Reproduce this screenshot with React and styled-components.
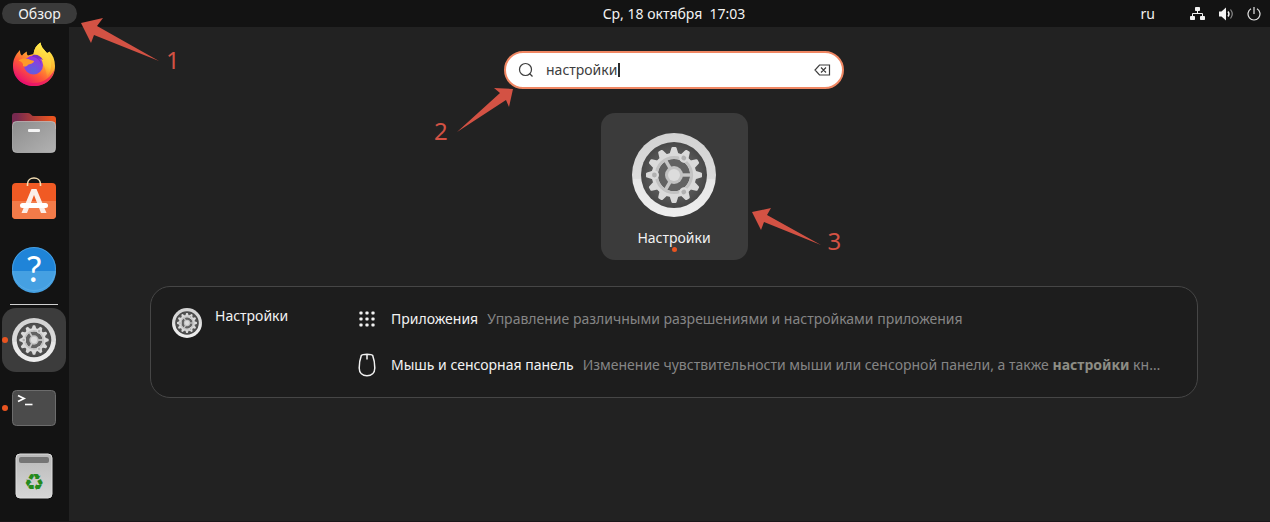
import React, { useState } from 'react';
import styled, { createGlobalStyle } from 'styled-components'

const GlobalStyle = createGlobalStyle`
  * { box-sizing: border-box; }
  body {
    margin: 0;
    background: #222222;
    color: #f2f2f2;
    font-family: "Noto Sans", "Open Sans", sans-serif;
    font-size: 14px;
    line-height: 20px;
  }
  button, input { font: inherit; color: inherit; }
  ul { list-style: none; margin: 0; padding: 0; }
  svg { display: block; }
`

const Desktop = styled.div`
  min-height: 100vh;
  display: flex;
  flex-direction: column;
  border-bottom: 1px solid #1b171a;
`

const TopBar = styled.header`
  display: grid;
  grid-template-columns: 78px 1fr;
  align-items: center;
  height: 27px;
  background: #131313;
`

const Plain = styled.button`
  border: 0;
  padding: 0;
  background: none;
`

const Overview = styled(Plain)`
  position: relative;
  height: 21px;
  margin: 0 1px 0 2px;
  border-radius: 11px;
  background: #3a3a3a;
`

const BarRest = styled.div`
  display: grid;
  grid-template-columns: 1fr auto 1fr;
  align-items: center;
`

const Clock = styled(Plain)`
  grid-column: 2;
  white-space: pre;
`

const Status = styled.div`
  display: flex;
  justify-content: flex-end;
  align-items: center;
  gap: 13px;
  padding-right: 9px;
`

const Lang = styled(Plain)`
  margin-right: 22px;
`

const Body = styled.div`
  flex: 1;
  display: flex;
`

const Dock = styled.nav`
  width: 69px;
  padding: 4px 3px 0 2px;
  background: #131313;
`

const DockCell = styled.li`
  padding: 2px 0;
`

const DockButton = styled(Plain)`
  position: relative;
  display: flex;
  align-items: center;
  justify-content: center;
  width: 64px;
  height: 64px;
  border-radius: 14px;
  background: ${p => p.$active ? '#3c3c3c' : 'none'};
`

const Running = styled.i`
  position: absolute;
  left: 0;
  width: 6px;
  height: 6px;
  border-radius: 50%;
  background: #e95420;
`

const Separator = styled.li`
  height: 1px;
  margin: 1px 8px;
  background: #cfcfcf;
`

const Main = styled.main`
  flex: 1;
  min-width: 0;
  display: flex;
  flex-direction: column;
  align-items: center;
  padding: 24px 0 0 9px;
`

const Search = styled.label`
  position: relative;
  display: flex;
  align-items: center;
  width: 340px;
  height: 38px;
  padding: 0 11px 0 12px;
  border: 2px solid #f08763;
  border-radius: 19px;
  background: #ffffff;
  color: #3d3d3d;
`

const SearchInput = styled.input`
  field-sizing: content;
  margin: 0 1px 0 12px;
  padding: 0;
  border: 0;
  outline: 0;
  background: none;
`

const Caret = styled.i`
  width: 2px;
  height: 14px;
  background: #2b2b2b;
`

const Clear = styled(Plain)`
  margin-left: auto;
`

const Tile = styled(Plain)`
  position: relative;
  display: flex;
  flex-direction: column;
  align-items: center;
  width: 147px;
  height: 147px;
  margin: 24px 0 26px;
  padding-top: 20px;
  border-radius: 14px;
  background: #3b3b3b;
`

const TileName = styled.span`
  margin-top: 11px;
`

const TileDot = styled.i`
  width: 5px;
  height: 5px;
  margin-top: -1px;
  border-radius: 50%;
  background: #e95420;
`

const Panel = styled.section`
  align-self: stretch;
  display: grid;
  grid-template-columns: 185px 1fr;
  margin: 0 72px;
  padding: 9px 20px 9px 21px;
  border: 1px solid #464646;
  border-radius: 20px;
  background: #1d1d1d;
`

const Provider = styled(Plain)`
  display: flex;
  align-items: flex-start;
  gap: 13px;
  padding-top: 10px;
  svg { margin-top: 2px; }
`

const Results = styled.ul`
  min-width: 0;
`

const Result = styled(Plain)`
  display: flex;
  align-items: center;
  width: 100%;
  height: 46px;
  text-align: left;
  white-space: nowrap;
`

const ResultIcon = styled.span`
  flex: none;
  display: flex;
  justify-content: center;
  width: 20px;
  margin-right: 14px;
`

const ResultTitle = styled.span`
  flex: none;
  margin-right: 9px;
`

const ResultText = styled.span`
  overflow: hidden;
  color: #858585;
  b { color: #8d8d85; }
`

// hint arrows lie over the desktop, anchored to the thing they point at
const Hint = styled.span`
  position: absolute;
  z-index: 1;
  left: ${p => p.$x}px;
  top: ${p => p.$y}px;
  display: flex;
  align-items: flex-start;
  gap: 6px;
  color: #d35244;
  font-size: 24px;
  line-height: 24px;
  pointer-events: none;
`

const HintNumber = styled.span`
  padding-top: ${p => p.$drop}px;
`

const toothAngles = [0, 30, 60, 90, 120, 150, 180, 210, 240, 270, 300, 330]

function Gear({ size }) {
  return (
    <svg width={size} height={size} viewBox="0 0 84 84">
      <defs>
        <radialGradient id="gearWell">
          <stop offset="0.5" stopColor="#626262" />
          <stop offset="1" stopColor="#474747" />
        </radialGradient>
        <linearGradient id="gearRim" x2="0" y2="1">
          <stop offset="0" stopColor="#d2d2d2" />
          <stop offset="0.54" stopColor="#dcdcdc" />
          <stop offset="0.55" stopColor="#e6e6e6" />
          <stop offset="1" stopColor="#eeeeee" />
        </linearGradient>
      </defs>
      <circle cx="42" cy="42" r="42" fill="url(#gearRim)" />
      <circle cx="42" cy="42" r="33" fill="url(#gearWell)" />
      <g fill="#dadada">
        {toothAngles.map(a => (
          <path key={a} d="M37.4 21.5 L39.4 15 Q39.7 14 40.6 14 H43.4 Q44.3 14 44.6 15 L46.6 21.5 Z" transform={`rotate(${a} 42 42)`} />
        ))}
      </g>
      <circle cx="42" cy="42" r="19.2" fill="none" stroke="#dadada" strokeWidth="6.2" />
      <circle cx="42" cy="42" r="17.6" fill="none" stroke="#c2c2c2" strokeWidth="3" />
      {[0, 120, 240].map(a => (
        <g key={a} transform={`rotate(${a} 42 42)`}>
          <path d="M49 42 H60" stroke="#c6c6c6" strokeWidth="3.4" />
          <circle cx="22.4" cy="42" r="4.6" fill="#dadada" />
          <circle cx="22.4" cy="42" r="2.4" fill="#b0b0b0" />
        </g>
      ))}
      <circle cx="42" cy="42" r="9" fill="#c2c2c2" />
      <circle cx="42" cy="42" r="6" fill="#dcdcdc" />
    </svg>
  )
}

function Firefox() {
  return (
    <svg width="48" height="48" viewBox="0 0 48 48">
      <defs>
        <linearGradient id="ffBody" x1="0.85" y1="0.1" x2="0.25" y2="0.95">
          <stop offset="0" stopColor="#fff04a" />
          <stop offset="0.35" stopColor="#ffb02e" />
          <stop offset="0.65" stopColor="#ff5a37" />
          <stop offset="1" stopColor="#e9106f" />
        </linearGradient>
        <radialGradient id="ffOrb" cx="0.5" cy="0.8" r="0.8">
          <stop offset="0" stopColor="#5b62dd" />
          <stop offset="1" stopColor="#a12fe0" />
        </radialGradient>
        <linearGradient id="ffTail" x1="0.7" y1="0" x2="0.4" y2="1">
          <stop offset="0" stopColor="#fff44f" />
          <stop offset="0.6" stopColor="#ffc83a" />
          <stop offset="1" stopColor="#ff8a2c" stopOpacity="0" />
        </linearGradient>
      </defs>
      <path d="M3 25 C3 19 5 14 10 9 C10 12 10.5 13.5 12 14.5 C13.5 12.8 15 11.5 17 10.5 C16.6 12 16.8 13.5 18 14.5 L23.5 13 C24 8 26.5 4 30.5 1.5 C31 6 34 8.5 37 12 L39.5 10.5 C43 14 45 19 45 25 C45 37 36 45 24 45 C12 45 3 37 3 25Z" fill="url(#ffBody)" />
      <path d="M3.5 28 C6 38 15 42.5 24 42 C34 42 41 36 44.7 28 C43 38.5 35 45 24 45 C13 45 5 38 3.5 28Z" fill="#e8106c" opacity="0.65" />
      <path d="M23.5 13 C24 8 26.5 4 30.5 1.5 C31 6 34 8.5 37 12 C42 18 43 28 37 36 C36 27 32 18 23.5 13Z" fill="url(#ffTail)" />
      <circle cx="23.5" cy="24" r="9.5" fill="url(#ffOrb)" />
      <path d="M23 14 C27 13 31 15 33 19 L28 17 C30 19 31 21 31 23 C29 18 26 16 22 16Z" fill="#7a2fc4" />
      <path d="M8.5 19.5 C12 16.5 16 17.5 18.5 18 C20 19 22.5 19.5 24 20 C24 22 21 23 18.5 23.5 C17 25 15.5 26.5 13 25 C13.5 22.5 12 20.5 8.5 19.5Z" fill="#ff9a28" />
    </svg>
  )
}

function Files() {
  return (
    <svg width="48" height="48" viewBox="0 0 48 48">
      <defs>
        <linearGradient id="folderBack"><stop offset="0.1" stopColor="#77294f" /><stop offset="0.9" stopColor="#e95420" /></linearGradient>
        <linearGradient id="folderFront" x1="0" x2="1" y2="1"><stop offset="0" stopColor="#8d8d8d" /><stop offset="1" stopColor="#b2b2b2" /></linearGradient>
      </defs>
      <path d="M2 20 V7 Q2 4 5 4 H18 Q20 4 21 5.5 Q22 7 24 7 H43 Q46 7 46 10 V20Z" fill="url(#folderBack)" />
      <rect x="2.5" y="12.5" width="43" height="31" rx="4" fill="url(#folderFront)" stroke="#c2c2c2" strokeOpacity="0.7" />
      <rect x="18" y="20" width="12" height="3" rx="1" fill="#f5f5f5" />
    </svg>
  )
}

function Software() {
  return (
    <svg width="48" height="48" viewBox="0 0 48 48">
      <rect x="2" y="6" width="44" height="36" rx="4" fill="#f05a24" />
      <path d="M2 24 H46 V38 Q46 42 42 42 H6 Q2 42 2 38Z" fill="#f37b49" />
      <path d="M17.5 9 V7 C17.5 -1 30.5 -1 30.5 7 V9" fill="none" stroke="#f6dfb4" strokeWidth="1.6" />
      <path d="M21.5 12 H26.500 L36.500 36 H31 L24 18 L17 36 H11.500Z" fill="#fbeee8" />
      <rect x="10" y="26" width="28" height="5" rx="2.5" fill="#ffffff" />
    </svg>
  )
}

function Help() {
  return (
    <svg width="48" height="48" viewBox="0 0 48 48">
      <circle cx="24" cy="24" r="22" fill="#1f84d8" />
      <path d="M2 26 A22 22 0 0 0 46 26Z" fill="#45a0e2" />
      <circle cx="24" cy="24" r="21.5" fill="none" stroke="#5fb0ea" strokeOpacity="0.6" />
      <text x="24" y="37" textAnchor="middle" fontFamily="Lato, sans-serif" fontSize="36" fill="#ffffff">?</text>
    </svg>
  )
}

function Terminal() {
  return (
    <svg width="48" height="48" viewBox="0 0 48 48">
      <rect x="2.5" y="6.5" width="43" height="35" rx="4" fill="#4b4b4b" stroke="#6c6c6c" />
      <path d="M8 11.5 L14 14.5 L8 17.5" fill="none" stroke="#ffffff" strokeWidth="1.8" />
      <path d="M15 20.5 H22.5" stroke="#ffffff" strokeWidth="1.6" />
    </svg>
  )
}

function Trash() {
  return (
    <svg width="48" height="48" viewBox="0 0 48 48">
      <defs>
        <linearGradient id="bin" x2="0" y2="1"><stop offset="0" stopColor="#b9b9b9" /><stop offset="1" stopColor="#d6d6d6" /></linearGradient>
      </defs>
      <rect x="6" y="2" width="36" height="44" rx="4" fill="url(#bin)" stroke="#dedede" />
      <rect x="9" y="5" width="30" height="6" rx="2" fill="#757575" />
      <text x="24" y="38" textAnchor="middle" fontFamily="DejaVu Sans, sans-serif" fontSize="23" fill="#248a1c">♻</text>
    </svg>
  )
}

function Network() {
  return (
    <svg width="16" height="14" viewBox="0 0 16 14" fill="#f2f2f2">
      <rect x="5" y="0" width="5" height="4" rx="0.8" />
      <rect x="0" y="9" width="5" height="4" rx="0.8" />
      <rect x="10" y="9" width="5" height="4" rx="0.8" />
      <path d="M7.5 4 V6.5 M2.5 9 V6.5 H12.5 V9" fill="none" stroke="#f2f2f2" />
    </svg>
  )
}

function Volume() {
  return (
    <svg width="15" height="14" viewBox="0 0 15 14">
      <path d="M0 4.5 H2.5 L7 0.5 V13.5 L2.5 9.5 H0Z" fill="#f2f2f2" />
      <path d="M9 4.5 Q11 7 9 9.5" fill="none" stroke="#f2f2f2" strokeWidth="1.4" />
      <path d="M11.5 2.5 Q15 7 11.5 11.5" fill="none" stroke="#8c8c8c" strokeWidth="1.2" />
    </svg>
  )
}

function Power() {
  return (
    <svg width="14" height="14" viewBox="0 0 14 14" fill="none" stroke="#e6e6e6" strokeWidth="1.2">
      <path d="M4 1.8 A6 6 0 1 0 10 1.8 M7 0 V7" />
    </svg>
  )
}

function Lens() {
  return (
    <svg width="16" height="16" viewBox="0 0 16 16" fill="none" stroke="#3d3d3d" strokeWidth="1.2">
      <circle cx="7.5" cy="7.5" r="6" />
      <path d="M11.5 11.5 L14.5 14.5" />
    </svg>
  )
}

function Backspace() {
  return (
    <svg width="17" height="12" viewBox="0 0 17 12" fill="none" stroke="#3d3d3d" strokeWidth="1.2">
      <path d="M5.5 1 H15.5 V11 H5.5 L1 6Z M7 3.5 L12 8.5 M12 3.5 L7 8.5" />
    </svg>
  )
}

function AppsGrid() {
  const steps = [2, 8, 14]
  return (
    <svg width="16" height="16" viewBox="0 0 16 16" fill="#f2f2f2">
      {steps.map(y => steps.map(x => <rect key={x + '-' + y} x={x - 1.6} y={y - 1.6} width="3.2" height="3.2" rx="1" />))}
    </svg>
  )
}

function Mouse() {
  return (
    <svg width="18" height="24" viewBox="0 0 18 24" fill="none" stroke="#f2f2f2" strokeWidth="1.5">
      <path d="M9 1.2 C12 1.2 14 1.5 14.7 2.5 C15.8 5.5 16.8 10 16.8 15 C16.8 20 13.5 22.8 9 22.8 C4.5 22.8 1.2 20 1.2 15 C1.2 10 2.2 5.5 3.3 2.5 C4 1.5 6 1.2 9 1.2Z M9 1.5 V6.5" />
    </svg>
  )
}

const apps = [
  { name: 'Firefox', icon: <Firefox /> },
  { name: 'Файлы', icon: <Files /> },
  { name: 'Ubuntu Software', icon: <Software /> },
  { name: 'Справка', icon: <Help /> },
]

const opened = [
  { name: 'Настройки', icon: <Gear size={44} />, active: true, running: true },
  { name: 'Терминал', icon: <Terminal />, running: true },
  { name: 'Корзина', icon: <Trash /> },
]

function DockItem({ app }) {
  return (
    <DockCell>
      <DockButton aria-label={app.name} $active={app.active}>
        {app.running && <Running />}
        {app.icon}
      </DockButton>
    </DockCell>
  )
}

export default function App() {
  const [query, setQuery] = useState('настройки')

  return (
    <Desktop>
      <GlobalStyle />
      <TopBar>
        <Overview>
          Обзор
          <Hint $x={79} $y={15}>
            <svg width="79" height="44" viewBox="0 0 79 44">
              <path d="M0 5 L22 0 L16 8 L78 43 L13 17 L10 25Z" fill="currentColor" />
            </svg>
            <HintNumber $drop={30}>1</HintNumber>
          </Hint>
        </Overview>
        <BarRest>
          <Clock>Ср, 18 октября  17:03</Clock>
          <Status>
            <Lang>ru</Lang>
            <Network />
            <Volume />
            <Power />
          </Status>
        </BarRest>
      </TopBar>
      <Body>
        <Dock>
          <ul>
            {apps.map(app => <DockItem key={app.name} app={app} />)}
            <Separator />
            {opened.map(app => <DockItem key={app.name} app={app} />)}
          </ul>
        </Dock>
        <Main>
          <Search>
            <Lens />
            <SearchInput aria-label="Поиск" value={query} onChange={e => setQuery(e.target.value)} />
            <Caret />
            <Clear aria-label="Очистить" onClick={() => setQuery('')}><Backspace /></Clear>
            <Hint $x={-72} $y={35}>
              <HintNumber $drop={31}>2</HintNumber>
              <svg width="60" height="54" viewBox="0 0 60 54">
                <path d="M59 1 L40 0 L46 5 L3 44 L52 12 L55 19Z" fill="currentColor" />
              </svg>
            </Hint>
          </Search>
          <Tile>
            <Gear size={84} />
            <TileName>Настройки</TileName>
            <TileDot />
            <Hint $x={151} $y={95}>
              <svg width="70" height="42" viewBox="0 0 70 42">
                <path d="M0 4 L19 0 L15 7 L69 37 L12 14 L9 22Z" fill="currentColor" />
              </svg>
              <HintNumber $drop={21}>3</HintNumber>
            </Hint>
          </Tile>
          <Panel>
            <Provider>
              <Gear size={30} />
              Настройки
            </Provider>
            <Results>
              <li>
                <Result>
                  <ResultIcon><AppsGrid /></ResultIcon>
                  <ResultTitle>Приложения</ResultTitle>
                  <ResultText>Управление различными разрешениями и настройками приложения</ResultText>
                </Result>
              </li>
              <li>
                <Result>
                  <ResultIcon><Mouse /></ResultIcon>
                  <ResultTitle>Мышь и сенсорная панель</ResultTitle>
                  <ResultText>Изменение чувствительности мыши или сенсорной панели, а также <b>настройки</b> кн…</ResultText>
                </Result>
              </li>
            </Results>
          </Panel>
        </Main>
      </Body>
    </Desktop>
  )
}
